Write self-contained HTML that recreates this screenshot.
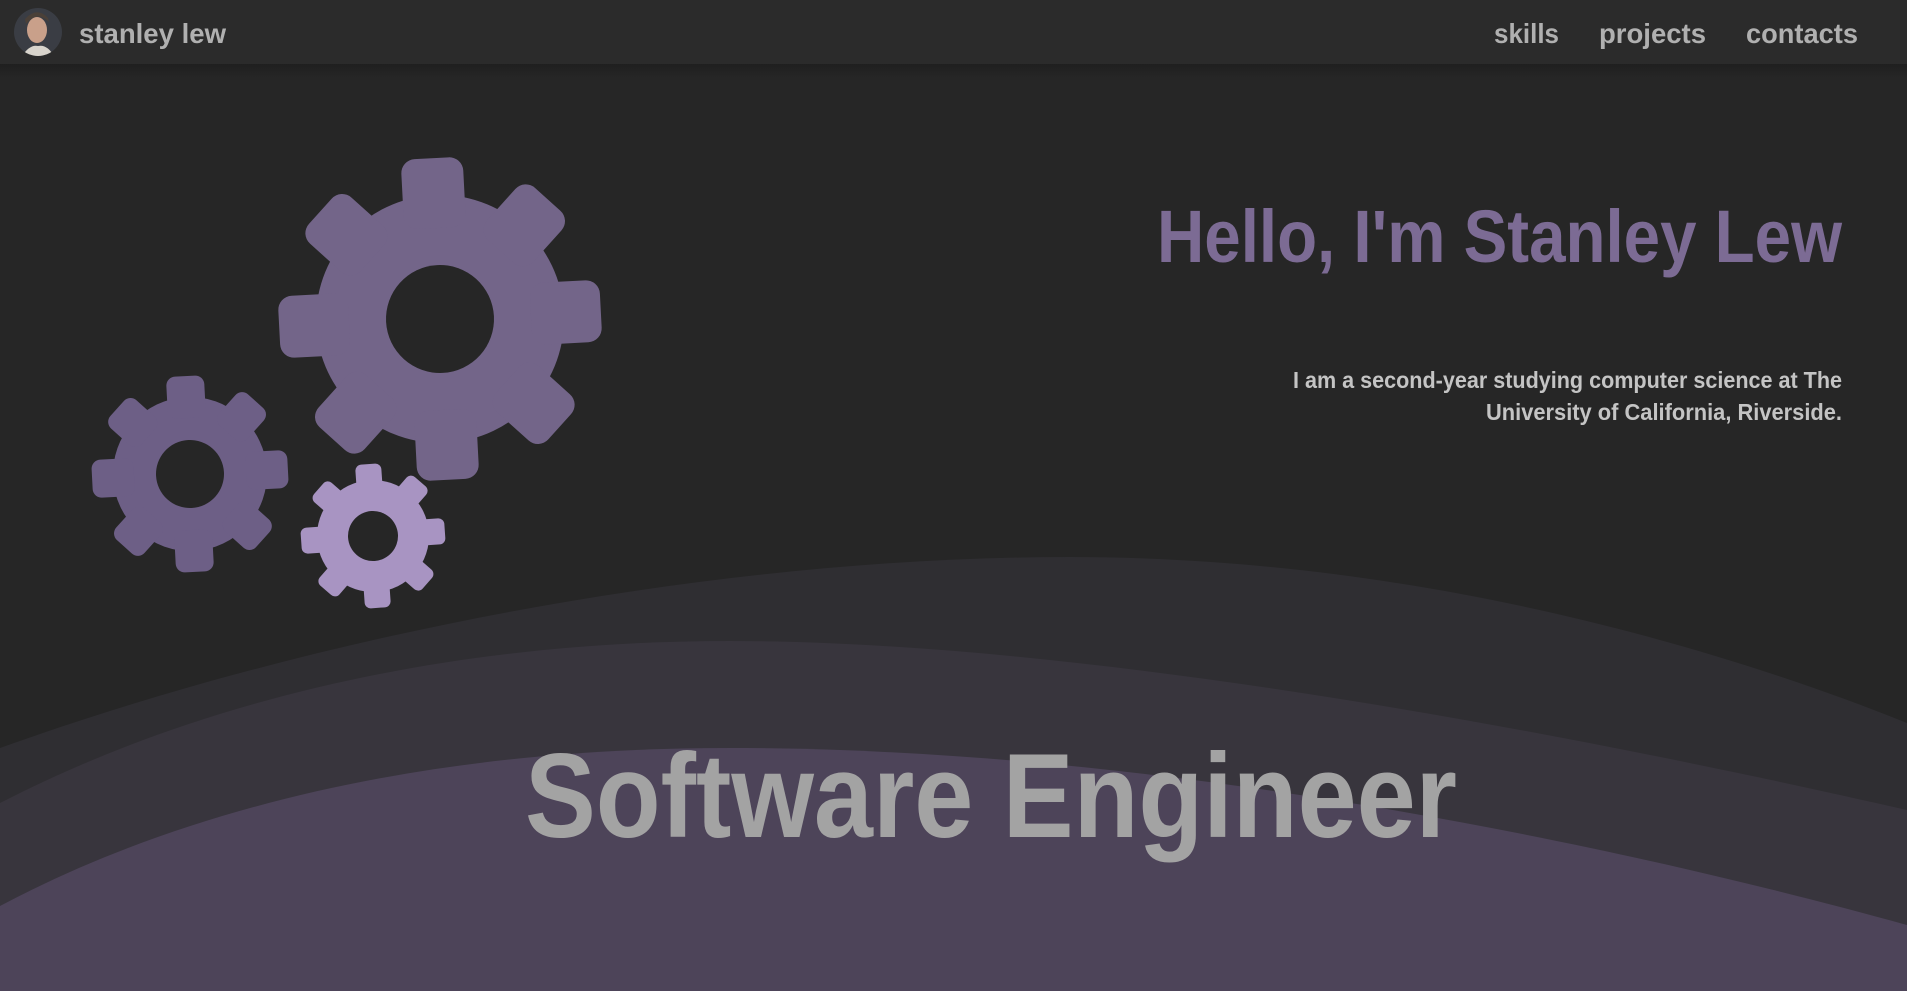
<!DOCTYPE html>
<html><head><meta charset="utf-8"><style>
html,body{margin:0;padding:0;background:#262626;width:1907px;height:991px;overflow:hidden}
svg{display:block}
text{font-family:"Liberation Sans",sans-serif}
</style></head><body>
<svg width="1907" height="991" viewBox="0 0 1907 991" xmlns="http://www.w3.org/2000/svg">
<defs>
<linearGradient id="sh" x1="0" y1="0" x2="0" y2="1"><stop offset="0" stop-color="#1f1f1f"/><stop offset="1" stop-color="#262626"/></linearGradient>
<clipPath id="av"><circle cx="38" cy="32" r="24"/></clipPath>
</defs>
<rect width="1907" height="991" fill="#262626"/>
<rect y="64" width="1907" height="14" fill="url(#sh)"/>
<path d="M0 748 C 300 640, 700 557, 1070 557 C 1400 557, 1700 640, 1907 723 L1907 991 L0 991Z" fill="#2f2e32"/>
<path d="M0 803 C 200 700, 450 641, 730 641 C 1100 641, 1600 740, 1907 810 L1907 991 L0 991Z" fill="#38353d"/>
<path d="M0 906 C 200 800, 450 748, 730 748 C 1150 748, 1600 840, 1907 925 L1907 991 L0 991Z" fill="#4d4459"/>
<rect width="1907" height="64" fill="#2b2b2b"/>
<g clip-path="url(#av)">
<rect x="14" y="8" width="48" height="48" fill="#3a3d44"/>
<ellipse cx="37" cy="30" rx="10" ry="13" fill="#c9a08a"/>
<path d="M26 24 Q37 10 49 22 L48 18 Q37 6 25 19Z" fill="#4a4038"/>
<path d="M22 56 Q30 44 38 46 Q47 44 54 56Z" fill="#d8d4cc"/>
</g>
<text x="79" y="43" font-size="28" font-weight="bold" fill="#b0b0b0" textLength="147" lengthAdjust="spacingAndGlyphs">stanley lew</text>
<text x="1494" y="43" font-size="28" font-weight="bold" fill="#b0b0b0" textLength="65" lengthAdjust="spacingAndGlyphs">skills</text>
<text x="1599" y="43" font-size="28" font-weight="bold" fill="#b0b0b0" textLength="107" lengthAdjust="spacingAndGlyphs">projects</text>
<text x="1746" y="43" font-size="28" font-weight="bold" fill="#b0b0b0" textLength="112" lengthAdjust="spacingAndGlyphs">contacts</text>
<g transform="translate(440 319) rotate(-3)" fill="#736589">
<circle r="124"/>
<g id="t1"><rect x="-31" y="-161" width="62" height="70" rx="14"/></g>
<use href="#t1" transform="rotate(45)"/><use href="#t1" transform="rotate(90)"/><use href="#t1" transform="rotate(135)"/>
<use href="#t1" transform="rotate(180)"/><use href="#t1" transform="rotate(225)"/><use href="#t1" transform="rotate(270)"/><use href="#t1" transform="rotate(315)"/>
<circle r="54" fill="#262626"/>
</g>
<g transform="translate(190 474) rotate(-3)" fill="#6d5f86">
<circle r="77"/>
<g id="t2"><rect x="-19" y="-98" width="38" height="42" rx="9"/></g>
<use href="#t2" transform="rotate(45)"/><use href="#t2" transform="rotate(90)"/><use href="#t2" transform="rotate(135)"/>
<use href="#t2" transform="rotate(180)"/><use href="#t2" transform="rotate(225)"/><use href="#t2" transform="rotate(270)"/><use href="#t2" transform="rotate(315)"/>
<circle r="34" fill="#262626"/>
</g>
<g transform="translate(373 536) rotate(-4)" fill="#a894c2">
<circle r="56"/>
<g id="t3"><rect x="-13" y="-72" width="26" height="30" rx="6"/></g>
<use href="#t3" transform="rotate(45)"/><use href="#t3" transform="rotate(90)"/><use href="#t3" transform="rotate(135)"/>
<use href="#t3" transform="rotate(180)"/><use href="#t3" transform="rotate(225)"/><use href="#t3" transform="rotate(270)"/><use href="#t3" transform="rotate(315)"/>
<circle r="25" fill="#262626"/>
</g>
<text x="1842" y="262" font-size="74" font-weight="bold" fill="#7c6b94" text-anchor="end" textLength="685" lengthAdjust="spacingAndGlyphs">Hello, I'm Stanley Lew</text>
<text x="1842" y="388" font-size="23" font-weight="bold" fill="#c4c4c4" text-anchor="end" textLength="549" lengthAdjust="spacingAndGlyphs">I am a second-year studying computer science at The</text>
<text x="1842" y="420" font-size="23" font-weight="bold" fill="#c4c4c4" text-anchor="end" textLength="356" lengthAdjust="spacingAndGlyphs">University of California, Riverside.</text>
<text x="525" y="837" font-size="120" font-weight="bold" fill="#a3a3a3" textLength="932" lengthAdjust="spacingAndGlyphs">Software Engineer</text>
</svg>
</body></html>
